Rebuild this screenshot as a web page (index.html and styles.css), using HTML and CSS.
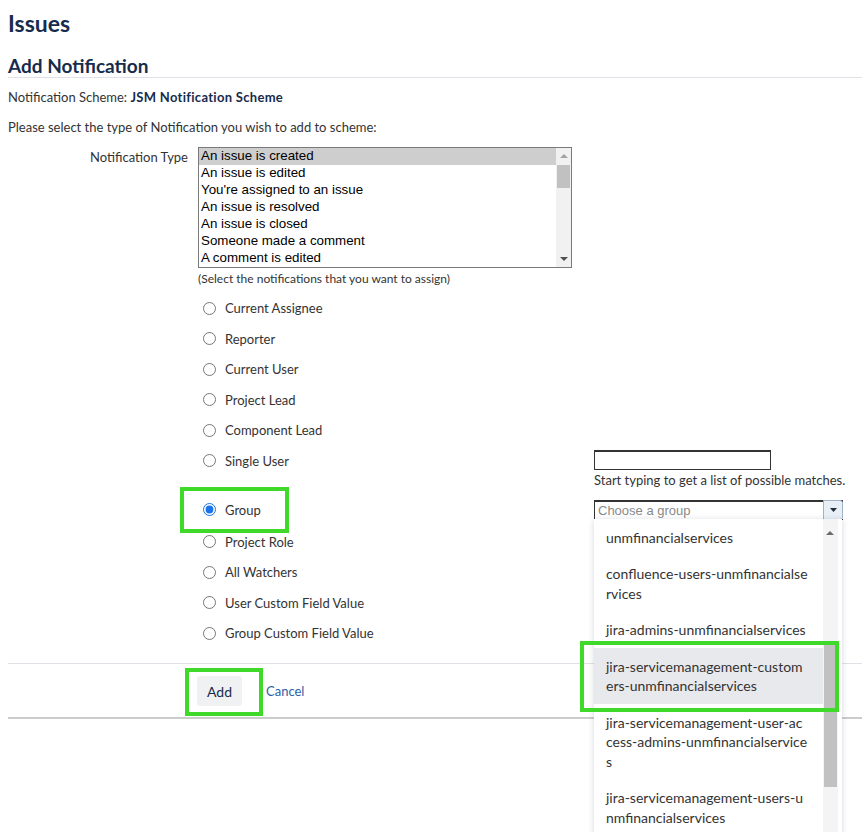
FILE: index.html
```html
<!DOCTYPE html>
<html lang="en">
<head>
<meta charset="utf-8">
<title>Add Notification</title>
<link rel="stylesheet" href="styles.css">
</head>
<body>
<div class="page">
  <h1 class="page-title">Issues</h1>
  <h2 class="section-title">Add Notification</h2>
  <p class="scheme">Notification Scheme: <strong>JSM Notification Scheme</strong></p>
  <p class="intro">Please select the type of Notification you wish to add to scheme:</p>

  <form class="form">
    <div class="field">
      <label class="field-label">Notification Type</label>
      <div class="field-body">
        <div class="listbox">
          <ul class="listbox-items">
            <li class="selected">An issue is created</li>
            <li>An issue is edited</li>
            <li>You're assigned to an issue</li>
            <li>An issue is resolved</li>
            <li>An issue is closed</li>
            <li>Someone made a comment</li>
            <li>A comment is edited</li>
          </ul>
          <div class="vscroll">
            <span class="sb-arrow sb-up"></span>
            <div class="sb-track"><div class="sb-thumb"></div></div>
            <span class="sb-arrow sb-down"></span>
          </div>
        </div>
        <div class="field-hint">(Select the notifications that you want to assign)</div>
      </div>
    </div>

    <div class="options">
      <div class="option"><label class="radio"><input type="radio" name="type">Current Assignee</label></div>
      <div class="option"><label class="radio"><input type="radio" name="type">Reporter</label></div>
      <div class="option"><label class="radio"><input type="radio" name="type">Current User</label></div>
      <div class="option"><label class="radio"><input type="radio" name="type">Project Lead</label></div>
      <div class="option"><label class="radio"><input type="radio" name="type">Component Lead</label></div>
      <div class="option option-tall">
        <label class="radio"><input type="radio" name="type">Single User</label>
        <div class="option-extra extra-user">
          <input class="text-input" type="text">
          <div class="extra-hint">Start typing to get a list of possible matches.</div>
        </div>
      </div>
      <div class="option option-group">
        <label class="radio"><input type="radio" name="type" checked>Group</label>
        <div class="option-extra">
          <div class="combo">
            <div class="combo-field">
              <span class="combo-placeholder">Choose a group</span>
              <span class="combo-button"><svg width="7" height="4" viewBox="0 0 7 4"><path d="M0 0h7L3.5 4z" fill="#1f2d3d"/></svg></span>
            </div>
            <div class="dropdown">
              <ul class="dropdown-items">
                <li>unmfinancialservices</li>
                <li>confluence-users-unmfinancialse<br>rvices</li>
                <li>jira-admins-unmfinancialservices</li>
                <li class="active">jira-servicemanagement-custom<br>ers-unmfinancialservices</li>
                <li>jira-servicemanagement-user-ac<br>cess-admins-unmfinancialservice<br>s</li>
                <li>jira-servicemanagement-users-u<br>nmfinancialservices</li>
              </ul>
              <div class="dd-scroll">
                <span class="dd-arrow"></span>
                <div class="dd-thumb"></div>
              </div>
            </div>
          </div>
        </div>
      </div>
      <div class="option"><label class="radio"><input type="radio" name="type">Project Role</label></div>
      <div class="option"><label class="radio"><input type="radio" name="type">All Watchers</label></div>
      <div class="option"><label class="radio"><input type="radio" name="type">User Custom Field Value</label></div>
      <div class="option"><label class="radio"><input type="radio" name="type">Group Custom Field Value</label></div>
    </div>

    <div class="buttons">
      <button class="btn" type="button">Add</button>
      <a class="cancel" href="#">Cancel</a>
    </div>
  </form>
</div>

<div class="callout callout-group"></div>
<div class="callout callout-add"></div>
<div class="callout callout-item"></div>
</body>
</html>
```

FILE: styles.css
```css
html, body {
  margin: 0;
  padding: 0;
  height: 100%;
  overflow: hidden;
  background: #fff;
}

body {
  font-family: Lato, "Open Sans", sans-serif;
  font-size: 13px;
  color: #172b4d;
  position: relative;
}

.page {
  padding: 8px 0 0 8px;
}

.page-title {
  margin: 0;
  font-size: 23px;
  line-height: 30px;
  font-weight: 700;
  color: #172b4d;
}

.section-title {
  margin: 17px 0 0;
  font-size: 19px;
  line-height: 21px;
  font-weight: 700;
  color: #172b4d;
  padding-bottom: 1px;
  border-bottom: 1px solid #dfe1e6;
}

.scheme {
  margin: 10px 0 0;
  line-height: 18px;
  color: #333;
}

.scheme strong {
  color: #172b4d;
  font-weight: 700;
  letter-spacing: 0.3px;
}

.intro {
  margin: 12px 0 0;
  line-height: 18px;
  color: #333;
}

.form {
  margin-top: 11px;
}

.field {
  display: flex;
}

.field-label {
  width: 180px;
  padding-right: 10px;
  text-align: right;
  line-height: 18px;
  padding-top: 1px;
  color: #333;
}

.field-body {
  display: flex;
  flex-direction: column;
}

.listbox {
  display: flex;
  width: 372px;
  height: 119px;
  border: 1px solid #7a7a7a;
  font-family: "Liberation Sans", Arial, sans-serif;
  font-size: 13.33px;
  color: #000;
}

.listbox-items {
  list-style: none;
  margin: 0;
  padding: 0;
  flex: 1;
}

.listbox-items li {
  height: 17px;
  line-height: 16px;
  padding-left: 2px;
}

.listbox-items li.selected {
  background: #cecece;
}

.vscroll {
  width: 15px;
  background: #f1f1f1;
  display: flex;
  flex-direction: column;
  align-items: center;
}

.sb-arrow {
  width: 0;
  height: 0;
  border-left: 4px solid transparent;
  border-right: 4px solid transparent;
  margin: 6px 0;
}

.sb-up {
  border-bottom: 4px solid #a3a3a3;
}

.sb-down {
  border-top: 4px solid #505050;
}

.sb-track {
  flex: 1;
  width: 100%;
  padding-top: 1px;
}

.sb-thumb {
  margin: 0 auto;
  width: 13px;
  height: 23px;
  background: #c1c1c1;
}

.field-hint {
  margin-top: 3px;
  font-size: 12px;
  line-height: 16px;
  color: #333;
}

.options {
  margin-top: 6px;
  padding-left: 190px;
}

.option {
  display: flex;
  align-items: flex-start;
  min-height: 30.5px;
}

.option-group {
  min-height: 32px;
}

.radio {
  display: flex;
  align-items: center;
  width: 396px;
  height: 30.5px;
  color: #333;
}

.radio input {
  margin: 0 9px 0 5px;
  width: 13px;
  height: 13px;
  accent-color: #1a73e8;
}

.option-extra {
  padding-top: 5px;
}

.extra-user {
  padding-top: 4px;
  padding-bottom: 6px;
}

.text-input {
  display: block;
  box-sizing: border-box;
  width: 177px;
  height: 20px;
  margin: 0;
  border: 1px solid #333;
  border-top-width: 2px;
  padding: 0 2px;
  font: inherit;
}

.extra-hint {
  margin-top: 1px;
  line-height: 18px;
  color: #333;
}

.combo {
  position: relative;
  width: 249px;
}

.combo-field {
  display: flex;
  height: 20px;
  box-sizing: border-box;
  border: 1px solid #333;
  border-top-width: 2px;
  border-right: 0;
}

.combo-placeholder {
  flex: 1;
  padding-left: 3px;
  font-family: "Liberation Sans", Arial, sans-serif;
  font-size: 13px;
  line-height: 17px;
  color: #8a8a8a;
}

.combo-button {
  width: 20px;
  margin-top: -2px;
  height: 20px;
  box-sizing: border-box;
  display: flex;
  align-items: center;
  justify-content: center;
  background: #e9eff7;
  border: 1px solid #9fb2c8;
  border-radius: 0 3px 3px 0;
}

.dropdown {
  position: absolute;
  top: 19.5px;
  left: 0;
  width: 248px;
  height: 340px;
  display: flex;
  background: #fff;
  box-shadow: 0 1px 6px rgba(9, 30, 66, 0.18);
  z-index: 5;
}

.dropdown-items {
  list-style: none;
  margin: 0;
  padding: 0;
  width: 229px;
  font-family: Lato, "Open Sans", sans-serif;
  font-size: 14px;
  color: #333;
}

.dropdown-items li {
  padding: 8.5px 10px 8.5px 12px;
  line-height: 19.5px;
  white-space: nowrap;
}

.dropdown-items li.active {
  background: #e8e9ec;
}

.dd-scroll {
  width: 15px;
  background: #f4f4f4;
  position: relative;
}

.dd-arrow {
  position: absolute;
  top: 12px;
  left: 3px;
  width: 0;
  height: 0;
  border-left: 4px solid transparent;
  border-right: 4px solid transparent;
  border-bottom: 4px solid #6b6b6b;
}

.dd-thumb {
  position: absolute;
  top: 123px;
  left: 1px;
  width: 13px;
  height: 145px;
  background: #c1c1c1;
}

.buttons {
  margin-top: 14.5px;
  border-top: 1px solid #dfe1e6;
  border-bottom: 2px solid #ccc;
  padding: 12px 0 11px 189px;
  display: flex;
  align-items: center;
}

.btn {
  height: 30px;
  padding: 0 10px;
  border: 0;
  border-radius: 3px;
  background: #f0f1f3;
  font-family: Lato, "Open Sans", sans-serif;
  font-size: 14px;
  color: #172b4d;
}

.cancel {
  margin-left: 24px;
  color: #2d5fa8;
  text-decoration: none;
  font-size: 13px;
}

.callout {
  position: absolute;
  border: 4px solid #3fd92a;
  box-sizing: border-box;
  z-index: 10;
}

.callout-group {
  left: 180px;
  top: 487px;
  width: 109px;
  height: 46px;
}

.callout-add {
  left: 185px;
  top: 668px;
  width: 78px;
  height: 48px;
}

.callout-item {
  left: 580px;
  top: 641px;
  width: 259px;
  height: 71px;
}
```
